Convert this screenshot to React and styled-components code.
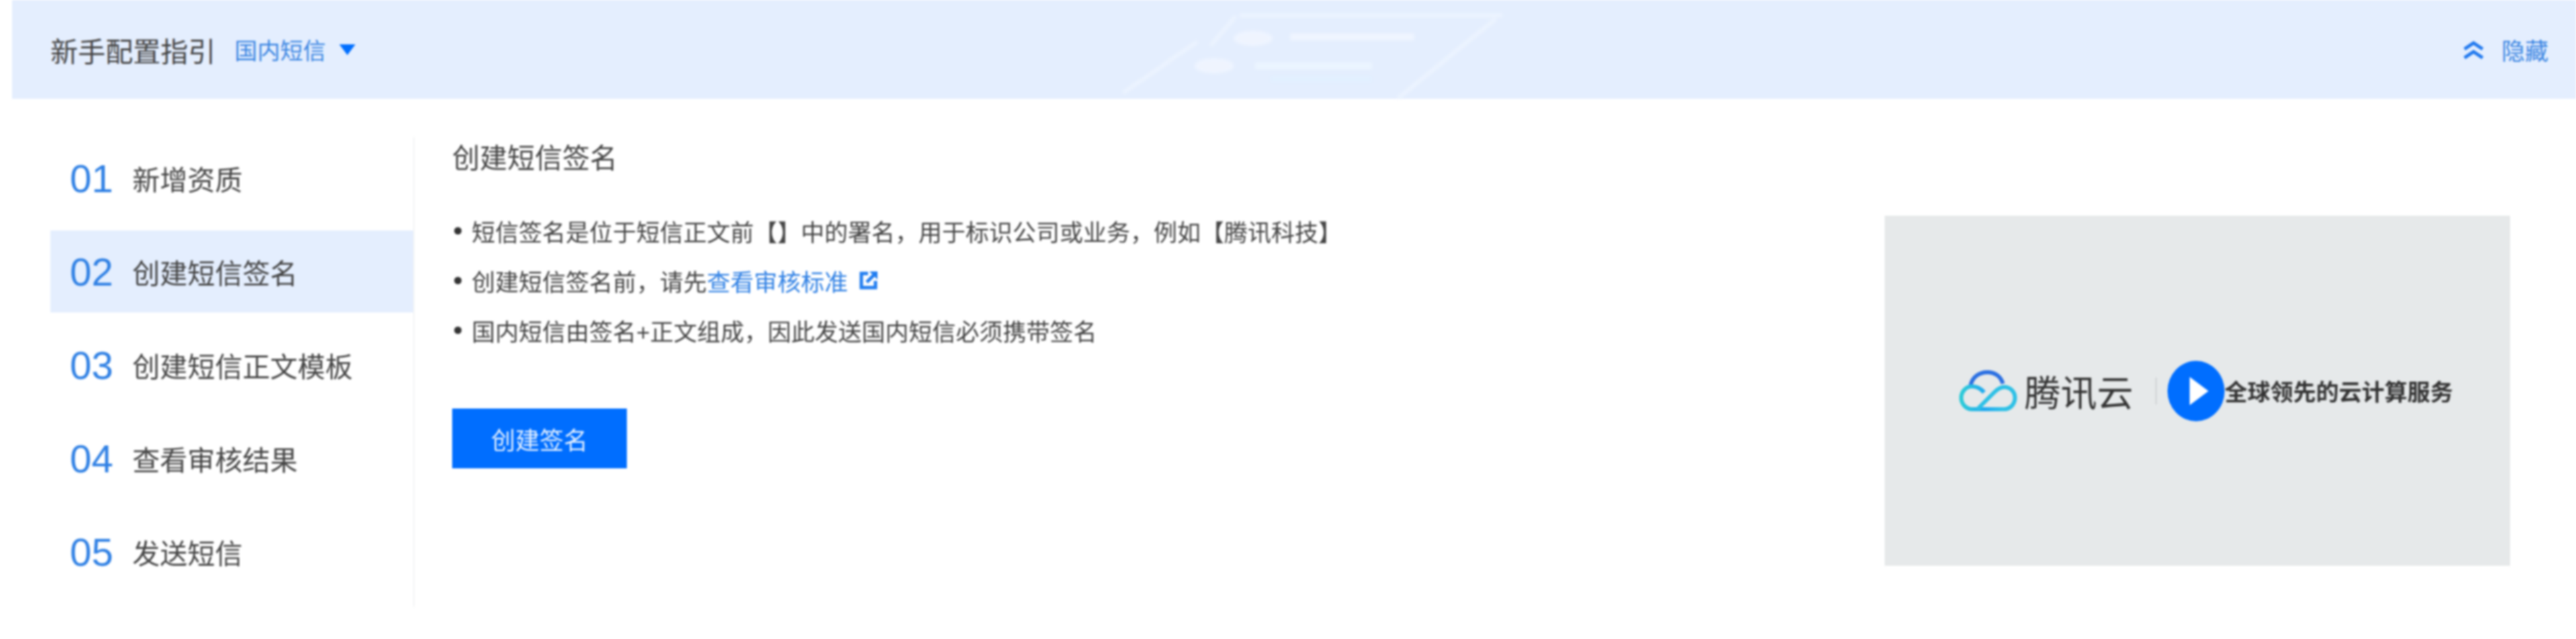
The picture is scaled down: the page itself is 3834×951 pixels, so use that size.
import styled, { createGlobalStyle } from 'styled-components';

const steps = ['新增资质', '创建短信签名', '创建短信正文模板', '查看审核结果', '发送短信'];

function ExternalIcon() {
  return (
    <LinkIcon viewBox="0 0 30 30">
      <path d="M14 5H4v21h21V16" fill="none" stroke="#1f7cf0" strokeWidth="5" />
      <path d="M12 18 24 6" stroke="#1f7cf0" strokeWidth="5" />
      <path d="M16 2h12v12z" fill="#1f7cf0" />
    </LinkIcon>
  );
}

// 헤더 배경의 흐린 장식
function HeaderArt() {
  return (
    <ArtSvg viewBox="0 0 640 147">
      <g fill="none" stroke="#f1f7ff" strokeWidth="5">
        <path d="M175 23H566" />
        <path d="M169 24 132 68" />
        <path d="M112 62 2 138" />
        <path d="M556 28 410 147" />
      </g>
      <ellipse cx="195" cy="57" rx="29" ry="11" fill="#f3f7ff" />
      <ellipse cx="137" cy="98" rx="29" ry="11" fill="#f3f7ff" />
      <rect x="250" y="50" width="185" height="10" fill="#f3f7ff" />
      <rect x="198" y="93" width="174" height="10" fill="#eef7ff" />
      <rect x="220" y="113" width="152" height="10" fill="#e1f0ff" />
    </ArtSvg>
  );
}

function CloudLogo() {
  return (
    <CloudSvg viewBox="0 0 86 62">
      <defs>
        <linearGradient id="cloudBottom" x1="0" y1="0" x2="1" y2="0">
          <stop offset="0" stopColor="#2bcbd8" />
          <stop offset="0.55" stopColor="#1fa8f0" />
          <stop offset="1" stopColor="#30c4e8" />
        </linearGradient>
      </defs>
      <path d="M17 23C19 10 30 3 42 3c11 0 20 6 23 17" fill="none" stroke="#2a6fe2" strokeWidth="6" />
      <path d="M37 33C32 27 26 24 19 24 10 24 3 32 3 41s7 17 16 17h48" fill="none" stroke="url(#cloudBottom)" strokeWidth="6" />
      <path d="M27 58 52 33c5-5 9-8 15-8 9 0 16 7 16 16s-7 17-16 17" fill="none" stroke="#2cc0e6" strokeWidth="6" />
    </CloudSvg>
  );
}

export default function App() {
  return (
    <Page>
      <GlobalStyle />
      <Header>
        <HeaderArt />
        <HeaderLeft>
          <HeaderTitle>新手配置指引</HeaderTitle>
          <Switcher>国内短信</Switcher>
          <Caret />
        </HeaderLeft>
        <HideButton>
          <svg width="31" height="28" viewBox="0 0 31 28">
            <path d="M2 13 15.5 4 29 13M2 26l13.5-9L29 26" fill="none" stroke="#1f78ee" strokeWidth="5" />
          </svg>
          <span>隐藏</span>
        </HideButton>
      </Header>
      <Main>
        <Sidebar>
          {steps.map((label, i) => (
            <Step key={label} $active={i === 1}>
              <StepNo>0{i + 1}</StepNo>
              <span>{label}</span>
            </Step>
          ))}
        </Sidebar>
        <Content>
          <TextColumn>
            <Title>创建短信签名</Title>
            <TipList>
              <Tip>短信签名是位于短信正文前【】中的署名，用于标识公司或业务，例如【腾讯科技】</Tip>
              <Tip>
                创建短信签名前，请先<DocLink>查看审核标准</DocLink>
                <ExternalIcon />
              </Tip>
              <Tip>国内短信由签名+正文组成，因此发送国内短信必须携带签名</Tip>
            </TipList>
            <PrimaryButton>创建签名</PrimaryButton>
          </TextColumn>
          <VideoCard>
            <CloudLogo />
            <BrandName>腾讯云</BrandName>
            <BrandDivider />
            <Slogan>全球领先的云计算服务</Slogan>
            <PlayButton>
              <PlayArrow />
            </PlayButton>
          </VideoCard>
        </Content>
      </Main>
    </Page>
  );
}

const GlobalStyle = createGlobalStyle`
  body {
    margin: 0;
    background: #fff;
    font-family: 'Liberation Sans', 'Noto Sans CJK SC', sans-serif;
    color: #444;
  }
`;

const Page = styled.div`
  width: 3834px;
  height: 951px;
  padding-left: 18px;
  box-sizing: border-box;
  overflow: hidden;
  filter: blur(1.4px);
`;

const Header = styled.header`
  position: relative;
  height: 147px;
  padding: 0 41px 0 57px;
  display: flex;
  align-items: center;
  justify-content: space-between;
  background: #e4eefe;
`;

const ArtSvg = styled.svg`
  position: absolute;
  left: 1652px;
  top: 0;
  width: 640px;
  height: 147px;
  opacity: 0.75;
  filter: blur(2px);
`;

const HeaderLeft = styled.div`
  display: flex;
  align-items: center;
`;

const HeaderTitle = styled.span`
  font-size: 41px;
`;

const Switcher = styled.span`
  margin-left: 28px;
  font-size: 34px;
  color: #3a85e2;
`;

const Caret = styled.i`
  margin-left: 20px;
  width: 0;
  height: 0;
  border-left: 12px solid transparent;
  border-right: 12px solid transparent;
  border-top: 16px solid #006eff;
`;

const HideButton = styled.div`
  display: flex;
  align-items: center;
  gap: 26px;
  font-size: 35px;
  color: #3a85e2;
`;

const Main = styled.main`
  display: flex;
  padding: 57px 98px 0 57px;
`;

const Sidebar = styled.nav`
  width: 540px;
  height: 699px;
  flex: none;
  border-right: 2px solid #f3f4f5;
  display: flex;
  flex-direction: column;
  gap: 17px;
`;

const Step = styled.div`
  height: 122px;
  padding-left: 29px;
  display: flex;
  align-items: center;
  gap: 31px;
  font-size: 41px;
  background: ${(p) => (p.$active ? '#e4eefe' : 'transparent')};
`;

const StepNo = styled.span`
  width: 62px;
  font-size: 58px;
  color: #2f80e4;
`;

const Content = styled.section`
  flex: 1;
  padding-left: 56px;
  display: flex;
  justify-content: space-between;
  align-items: flex-start;
`;

const TextColumn = styled.div`
  display: flex;
  flex-direction: column;
  align-items: flex-start;
`;

const Title = styled.h2`
  margin: 0 0 38px;
  font-size: 41px;
  font-weight: 400;
  line-height: 64px;
`;

const TipList = styled.ul`
  margin: 0 0 80px;
  padding: 0 0 0 3px;
  list-style: none;
`;

const Tip = styled.li`
  height: 74px;
  display: flex;
  align-items: center;
  font-size: 35px;
  &::before {
    content: '';
    width: 11px;
    height: 11px;
    margin-right: 15px;
    border-radius: 50%;
    background: #333;
  }
`;

const DocLink = styled.a`
  color: #2f80e4;
`;

const LinkIcon = styled.svg`
  width: 30px;
  height: 30px;
  margin-left: 16px;
`;

const PrimaryButton = styled.button`
  width: 260px;
  height: 89px;
  border: 0;
  background: #006eff;
  color: #e4f0ff;
  font: inherit;
  font-size: 36px;
`;

const VideoCard = styled.div`
  position: relative;
  width: 931px;
  height: 521px;
  margin-top: 117px;
  padding-left: 111px;
  box-sizing: border-box;
  display: flex;
  align-items: center;
  background: #e6e9ea;
`;

const CloudSvg = styled.svg`
  width: 86px;
  height: 62px;
  flex: none;
`;

const BrandName = styled.span`
  margin-left: 11px;
  font-size: 54px;
  color: #333;
`;

const BrandDivider = styled.i`
  width: 2px;
  height: 40px;
  margin-left: 33px;
  background: #cfd2d4;
`;

const Slogan = styled.span`
  margin-left: 101px;
  font-size: 34px;
  font-weight: 700;
  color: #333;
`;

const PlayButton = styled.div`
  position: absolute;
  left: 421px;
  top: 216px;
  width: 85px;
  height: 90px;
  border-radius: 50%;
  background: #006eff;
  display: flex;
  align-items: center;
  justify-content: center;
`;

const PlayArrow = styled.i`
  margin-left: 8px;
  width: 0;
  height: 0;
  border-top: 21px solid transparent;
  border-bottom: 21px solid transparent;
  border-left: 28px solid #fff;
`;
